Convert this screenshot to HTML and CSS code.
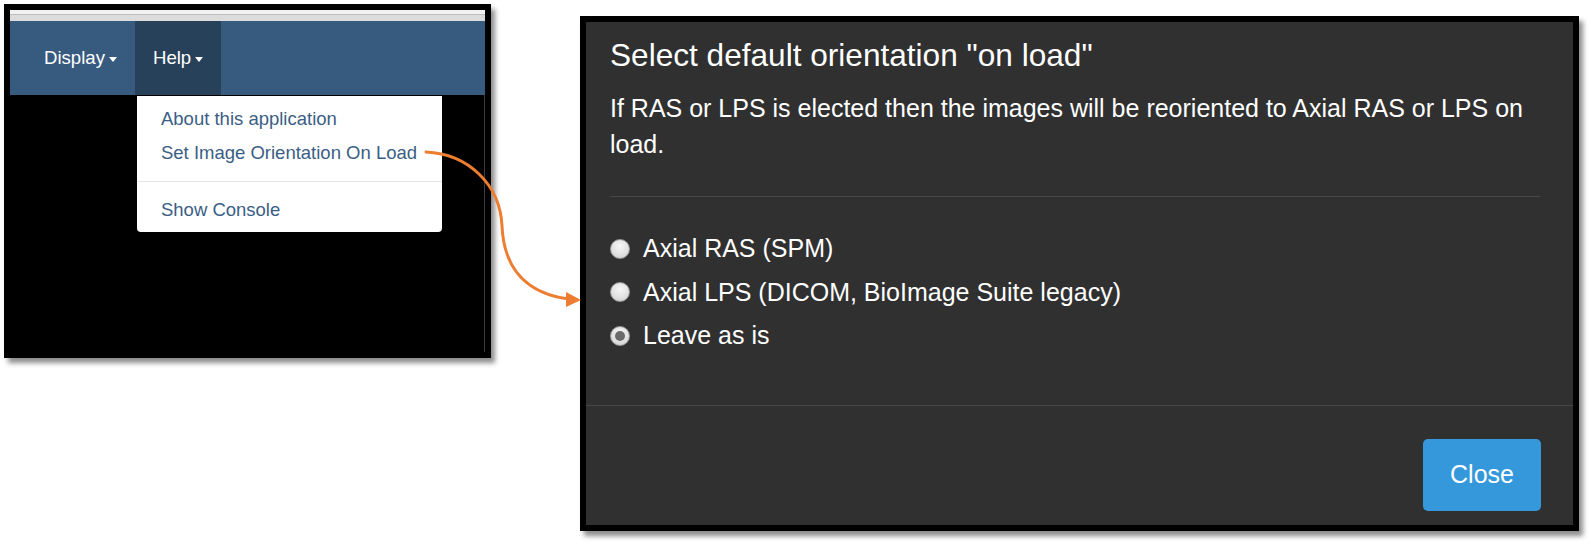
FILE: index.html
```html
<!DOCTYPE html>
<html lang="en">
<head>
<meta charset="utf-8">
<title>Orientation on load</title>
<link rel="stylesheet" href="styles.css">
</head>
<body>
<div class="stage">
  <div class="app-frame">
    <div class="chrome-strip"></div>
    <nav class="navbar">
      <div class="nav-item">Display<span class="caret"></span></div>
      <div class="nav-item active">Help<span class="caret"></span>
        <ul class="dropdown">
          <li class="dd-item">About this application</li>
          <li class="dd-item">Set Image Orientation On Load</li>
          <li class="dd-divider"></li>
          <li class="dd-item">Show Console</li>
        </ul>
      </div>
    </nav>
    <div class="viewer"></div>
  </div>

  <div class="modal">
    <div class="modal-body">
      <h4 class="modal-title">Select default orientation "on load"</h4>
      <p class="modal-text">If RAS or LPS is elected then the images will be reoriented to Axial RAS or LPS on load.</p>
      <hr class="modal-rule">
      <div class="radio-list">
        <label class="radio-row"><span class="radio"></span>Axial RAS (SPM)</label>
        <label class="radio-row"><span class="radio"></span>Axial LPS (DICOM, BioImage Suite legacy)</label>
        <label class="radio-row"><span class="radio checked"></span>Leave as is</label>
      </div>
    </div>
    <div class="modal-footer">
      <button class="btn-close" type="button">Close</button>
    </div>
  </div>
</div>

<svg class="arrow" width="1591" height="544" viewBox="0 0 1591 544" xmlns="http://www.w3.org/2000/svg">
  <path d="M426 152 C468 154 500 184 502 226 C504 272 530 294 569 299" fill="none" stroke="#ed7d31" stroke-width="3" stroke-linecap="round"/>
  <polygon points="566,292 581,300 566,307" fill="#ed7d31"/>
</svg>
</body>
</html>
```

FILE: styles.css
```css
* {
  box-sizing: border-box;
}

html, body {
  margin: 0;
  padding: 0;
  background: #ffffff;
}

body {
  position: relative;
  width: 1591px;
  height: 544px;
  overflow: hidden;
  font-family: "Liberation Sans", Arial, Helvetica, sans-serif;
}

.stage {
  display: flex;
  align-items: flex-start;
  gap: 89px;
  padding: 4px 0 0 4px;
}

/* ---------- left: application window ---------- */
.app-frame {
  width: 487px;
  height: 354px;
  border: 6px solid #000;
  background: #000;
  display: flex;
  flex-direction: column;
  box-shadow: 4px 5px 5px rgba(0, 0, 0, 0.45);
}

.chrome-strip {
  height: 11px;
  background: linear-gradient(to bottom, #f2f2f2 0, #f2f2f2 4px, #bdbdbd 4px, #bdbdbd 5px, #dcdcdc 5px, #dcdcdc 100%);
}

.navbar {
  height: 74px;
  background: #375a7f;
  display: flex;
  align-items: stretch;
  padding-left: 16px;
}

.nav-item {
  position: relative;
  display: flex;
  align-items: center;
  padding: 0 18px;
  color: #ffffff;
  font-size: 18.6px;
}

.nav-item.active {
  background: #28415b;
}

.caret {
  display: inline-block;
  width: 0;
  height: 0;
  margin-left: 4px;
  margin-top: 2px;
  border-top: 5px solid #ffffff;
  border-left: 4px solid transparent;
  border-right: 4px solid transparent;
}

.dropdown {
  position: absolute;
  top: 75px;
  left: 2px;
  width: 305px;
  margin: 0;
  padding: 6px 0 5px;
  list-style: none;
  background: #ffffff;
  border-radius: 0 0 4px 4px;
  z-index: 2;
}

.dd-item {
  padding: 4px 24px;
  line-height: 26px;
  font-size: 18.5px;
  color: #3b5e85;
  white-space: nowrap;
}

.dd-divider {
  height: 1px;
  margin: 11px 0;
  background: #e5e5e5;
}

.viewer {
  flex: 1;
  background: #000;
  border-right: 1px solid #3c3c3c;
}

/* ---------- right: modal dialog ---------- */
.modal {
  width: 999px;
  height: 515px;
  margin-top: 12px;
  border: 6px solid #000;
  background: #303030;
  color: #ffffff;
  display: flex;
  flex-direction: column;
  box-shadow: 4px 5px 5px rgba(0, 0, 0, 0.45);
}

.modal-body {
  padding: 15px 33px 47px 24px;
  border-bottom: 1px solid #474747;
}

.modal-title {
  margin: 0;
  font-size: 31.6px;
  font-weight: normal;
  line-height: 36px;
}

.modal-text {
  margin: 17px 0 0;
  font-size: 25px;
  line-height: 36px;
}

.modal-rule {
  margin: 34px 0 0;
  border: 0;
  height: 1px;
  background: #474747;
}

.radio-list {
  margin-top: 30px;
  display: flex;
  flex-direction: column;
}

.radio-row {
  height: 43.5px;
  display: flex;
  align-items: center;
  gap: 13px;
  font-size: 25px;
}

.radio {
  width: 20px;
  height: 20px;
  border-radius: 50%;
  flex: none;
  background: radial-gradient(circle at 50% 35%, #f6f6f6 0, #e2e2e2 55%, #c8c8c8 100%);
  border: 1px solid #9a9a9a;
  display: flex;
  align-items: center;
  justify-content: center;
}

.radio.checked::after {
  content: "";
  width: 10px;
  height: 10px;
  border-radius: 50%;
  background: #6a6a6a;
}

.modal-footer {
  flex: 1;
  display: flex;
  justify-content: flex-end;
  align-items: flex-start;
  padding: 33px 32px 0 0;
}

.btn-close {
  width: 118px;
  height: 72px;
  border: 0;
  border-radius: 5px;
  background: #3498db;
  color: #ffffff;
  font-family: "Liberation Sans", Arial, Helvetica, sans-serif;
  font-size: 25px;
  padding: 0;
}

/* ---------- annotation arrow ---------- */
.arrow {
  position: absolute;
  left: 0;
  top: 0;
  pointer-events: none;
  z-index: 5;
}
```
